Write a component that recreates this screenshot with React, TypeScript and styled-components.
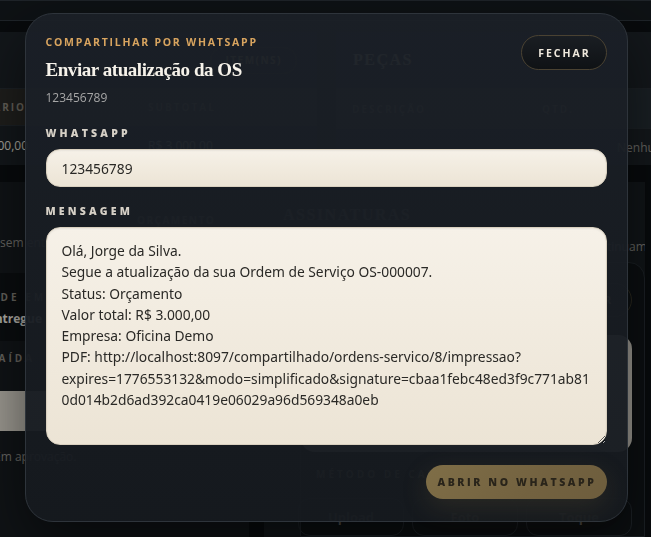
import React from "react";
import styled, { createGlobalStyle } from "styled-components";

const Global = createGlobalStyle`
  html, body { margin: 0; padding: 0; background: #0c0e11; }
  body { font-family: "Open Sans", "Noto Sans", sans-serif; overflow: hidden; }
  * { box-sizing: border-box; }
`;

/* ---------- background page ---------- */
const Page = styled.div`
  width: 651px;
  height: 537px;
  overflow: hidden;
  background: #0b0d10;
  display: flex;
  flex-direction: column;
  color: #d9d4cb;
`;
const TopBar = styled.div`
  height: 21px;
  flex: none;
  background: #13171b;
  border-top: 1px solid #2a3037;
  border-bottom: 1px solid #2a3037;
`;
const TopRow = styled.div`
  display: grid;
  grid-template-columns: 357px 1fr;
  column-gap: 19px;
  margin: 11px 0 0 -40px;
  height: 133px;
  flex: none;
`;
const BgCard = styled.div<{ $bg: string }>`
  background: ${(p) => p.$bg};
  display: flex;
  flex-direction: column;
  overflow: hidden;
`;
const CardHead = styled.div`
  height: 56px;
  display: flex;
  align-items: center;
  padding-left: 17px;
  justify-content: space-between;
`;
const CardTitle = styled.div<{ $dim?: boolean }>`
  font-family: "Liberation Serif", serif;
  font-weight: 700;
  font-size: 16px;
  letter-spacing: 1.5px;
  color: ${(p) => (p.$dim ? "#7a7467" : "#e9e3d8")};
`;
const Pill = styled.div`
  margin-left: auto;
  margin-right: 20px;
  height: 27px;
  padding: 0 14px;
  border-radius: 14px;
  border: 1px solid #3a3526;
  display: flex;
  align-items: center;
  font-size: 10px;
  font-weight: 700;
  letter-spacing: 1.5px;
  color: #d8c49a;
`;
const TRow = styled.div<{ $bg?: string; $h: number; $cols: string }>`
  height: ${(p) => p.$h}px;
  background: ${(p) => p.$bg || "transparent"};
  display: grid;
  grid-template-columns: ${(p) => p.$cols};
  align-items: center;
  border-top: 1px solid #262b31;
`;
const TH = styled.div<{ $align?: string; $pl?: number }>`
  font-size: 10px;
  font-weight: 700;
  letter-spacing: 2px;
  color: #8b8378;
  text-align: ${(p) => p.$align || "left"};
  padding-left: ${(p) => p.$pl || 0}px;
  white-space: nowrap;
`;
const TD = styled.div<{ $align?: string }>`
  font-size: 12px;
  color: #e6e1d8;
  text-align: ${(p) => p.$align || "left"};
  white-space: nowrap;
`;
const Muted = styled.div<{ $mt?: number; $ml?: number }>`
  margin-top: ${(p) => p.$mt || 0}px;
  margin-left: ${(p) => p.$ml || 0}px;
  font-size: 12px;
  color: #8d8a85;
  white-space: nowrap;
`;
const BottomRow = styled.div`
  display: grid;
  grid-template-columns: 249px 381px;
  column-gap: 15px;
  margin-top: 17px;
  flex: 1;
`;
const LeftStack = styled.div`
  background: #16191d;
  display: flex;
  flex-direction: column;
  padding-top: 26px;
  overflow: hidden;
`;
const Chip = styled.div`
  align-self: flex-start;
  margin-left: 131px;
  height: 24px;
  padding: 0 6px;
  font-size: 10px;
  font-weight: 700;
  letter-spacing: 1.5px;
  color: #7d7463;
  display: flex;
  align-items: center;
`;
const InfoBox = styled.div`
  margin: 22px 0 0 -40px;
  width: 180px;
  height: 68px;
  background: #0e1013;
  border-radius: 0 12px 12px 0;
  padding: 17px 0 0 0;
  display: flex;
  flex-direction: column;
  gap: 6px;
`;
const SmallLabel = styled.div<{ $ml?: number; $mt?: number }>`
  margin-left: ${(p) => p.$ml || 0}px;
  margin-top: ${(p) => p.$mt || 0}px;
  font-size: 10px;
  line-height: 14px;
  font-weight: 700;
  letter-spacing: 3px;
  color: #8a857d;
  white-space: nowrap;
`;
const BoldLine = styled.div`
  font-size: 12px;
  font-weight: 700;
  color: #f1ece3;
  white-space: nowrap;
`;
const BgInput = styled.div`
  margin: 26px 0 0 -20px;
  height: 40px;
  width: 200px;
  border-radius: 12px;
  background: #d8d2c7;
`;
const RightStack = styled.div`
  background: #171b1f;
  display: flex;
  flex-direction: column;
  padding: 24px 0 0 19px;
  overflow: hidden;
`;
const SubCard = styled.div`
  margin-top: 7px;
  margin-left: 17px;
  flex: 1;
  background: #101316;
  border: 1px solid #252a30;
  border-radius: 16px 16px 0 0;
  padding: 20px 12px 0 0;
  display: flex;
  flex-direction: column;
`;
const Ghost = styled.div`
  align-self: flex-end;
  height: 34px;
  padding: 0 18px;
  border-radius: 17px;
  border: 1px solid #3a3526;
  font-size: 10px;
  font-weight: 700;
  letter-spacing: 2px;
  color: #d9d2c4;
  display: flex;
  align-items: center;
`;
const Canvas = styled.div`
  margin-top: 18px;
  height: 117px;
  border-radius: 14px;
  background: #d9d3c8;
`;
const CaptureRow = styled.div`
  margin-top: 17px;
  display: grid;
  grid-template-columns: repeat(3, 1fr);
  gap: 8px;
  margin-left: -3px;
`;
const CaptureBtn = styled.div`
  height: 38px;
  border: 1px solid #262b31;
  border-radius: 12px;
  display: flex;
  justify-content: center;
  align-items: center;
  font-size: 13px;
  font-weight: 700;
  color: #6f6b65;
`;

/* ---------- modal ---------- */
const Overlay = styled.div`
  position: fixed;
  inset: 0;
  background: rgba(4, 6, 8, 0.28);
  display: flex;
  align-items: flex-start;
  justify-content: center;
  padding: 13px 0 0 1px;
`;
const Modal = styled.div`
  width: 603px;
  background: linear-gradient(180deg, rgba(27, 32, 39, 0.96) 0%, rgba(22, 26, 31, 0.96) 100%);
  border: 1px solid #2e343b;
  border-radius: 28px;
  padding: 20px 20px 22px 20px;
  box-shadow: 0 24px 60px rgba(0, 0, 0, 0.55);
  display: flex;
  flex-direction: column;
`;
const Header = styled.div`
  display: flex;
  justify-content: space-between;
  align-items: flex-start;
`;
const HeadText = styled.div`
  display: flex;
  flex-direction: column;
`;
const Eyebrow = styled.div`
  font-size: 10.5px;
  line-height: 16px;
  font-weight: 700;
  letter-spacing: 1.75px;
  color: #d8a45f;
`;
const Title = styled.h2`
  margin: 8px 0 0 0;
  font-family: "Liberation Serif", serif;
  font-weight: 700;
  font-size: 19px;
  line-height: 24px;
  letter-spacing: -0.45px;
  color: #f6f2ea;
`;
const Sub = styled.div`
  margin-top: 7px;
  font-size: 12px;
  line-height: 18px;
  color: #a7a7a7;
`;
const CloseBtn = styled.button`
  margin-top: 1px;
  height: 35px;
  width: 86px;
  border-radius: 18px;
  border: 1px solid #4a4232;
  background: linear-gradient(180deg, #1a1e23, #0f1215);
  color: #efe9dd;
  font-family: "Open Sans", sans-serif;
  font-size: 10.5px;
  font-weight: 700;
  letter-spacing: 2px;
  padding: 0 0 0 2px;
  cursor: pointer;
`;
const Field = styled.label<{ $mt: number }>`
  display: flex;
  flex-direction: column;
  gap: 9px;
  margin-top: ${(p) => p.$mt}px;
`;
const FieldLabel = styled.span`
  font-size: 10.5px;
  line-height: 14px;
  font-weight: 800;
  letter-spacing: 3.2px;
  color: #d6d0c6;
`;
const inputLook = `
  width: 100%;
  border: 1px solid #d9d0bf;
  border-radius: 14px;
  background: linear-gradient(180deg, #f6f1e8 0%, #ece4d5 100%);
  color: #2a2926;
  font-family: "Noto Sans", "Open Sans", sans-serif;
  font-size: 13.8px;
  outline: none;
  box-shadow: inset 0 1px 2px rgba(0,0,0,0.06);
`;
const Input = styled.input`
  ${inputLook}
  height: 38px;
  padding: 0 15px;
`;
const TextArea = styled.textarea`
  ${inputLook}
  height: 218px;
  padding: 12px 13px 12px 15px;
  line-height: 21.3px;
  resize: vertical;
  display: block;
`;
const Footer = styled.div`
  margin-top: 20px;
  display: flex;
  justify-content: flex-end;
`;
const PrimaryBtn = styled.button`
  height: 34px;
  width: 181px;
  border: none;
  border-radius: 17px;
  background: linear-gradient(135deg, #7f6e47 0%, #736240 60%, #6d5d3d 100%);
  box-shadow: 0 8px 26px rgba(120, 100, 60, 0.22);
  color: #29241a;
  font-family: "Open Sans", sans-serif;
  font-size: 10.5px;
  font-weight: 800;
  letter-spacing: 2.6px;
  padding: 0 0 0 2px;
  cursor: pointer;
`;

const message = `Olá, Jorge da Silva.
Segue a atualização da sua Ordem de Serviço OS-000007.
Status: Orçamento
Valor total: R$ 3.000,00
Empresa: Oficina Demo
PDF: http://localhost:8097/compartilhado/ordens-servico/8/impressao?expires=1776553132&modo=simplificado&signature=cbaa1febc48ed3f9c771ab810d014b2d6ad392ca0419e06029a96d569348a0eb`;

export default function App() {
  return (
    <>
      <Global />
      <Page>
        <TopBar />
        <TopRow>
          <BgCard $bg="#1a1e23">
            <CardHead>
              <span />
              <Pill>ITEM(NS)</Pill>
            </CardHead>
            <TRow $h={37} $bg="#2a2825" $cols="66px 122px 1fr">
              <TH $align="right">UNITÁRIO</TH>
              <span />
              <TH>SUBTOTAL</TH>
            </TRow>
            <TRow $h={40} $cols="68px 120px 1fr">
              <TD $align="right">R$ 3.000,00</TD>
              <span />
              <TD>R$ 3.000,00</TD>
            </TRow>
          </BgCard>
          <BgCard $bg="#1b1f24">
            <CardHead>
              <CardTitle>PEÇAS</CardTitle>
            </CardHead>
            <TRow $h={40} $bg="#232a30" $cols="206px 1fr">
              <TH $pl={16}>DESCRIÇÃO</TH>
              <TH>QTD.</TH>
            </TRow>
            <TRow $h={37} $cols="281px 1fr">
              <span />
              <Muted>Nenhuma peça adicionada</Muted>
            </TRow>
          </BgCard>
        </TopRow>
        <BottomRow>
          <LeftStack>
            <Chip>ORÇAMENTO</Chip>
            <Muted $mt={2}>sem entrada registrada</Muted>
            <InfoBox>
              <SmallLabel $ml={-4}>DATA DE EMISSÃO</SmallLabel>
              <BoldLine>Não entregue</BoldLine>
            </InfoBox>
            <SmallLabel $ml={-10} $mt={10}>SAÍDA</SmallLabel>
            <BgInput />
            <Muted $mt={17} $ml={-6}>Em aprovação.</Muted>
          </LeftStack>
          <RightStack>
            <CardTitle $dim>ASSINATURAS</CardTitle>
            <Muted $mt={14} $ml={220}>As assinaturas continuam intactas.</Muted>
            <SubCard>
              <Ghost>LIMPAR</Ghost>
              <Canvas />
              <SmallLabel $ml={15} $mt={15}>MÉTODO DE CAPTURA</SmallLabel>
              <CaptureRow>
                <CaptureBtn>Upload</CaptureBtn>
                <CaptureBtn>Foto</CaptureBtn>
                <CaptureBtn>Toque</CaptureBtn>
              </CaptureRow>
            </SubCard>
          </RightStack>
        </BottomRow>
      </Page>
      <Overlay>
        <Modal>
          <Header>
            <HeadText>
              <Eyebrow>COMPARTILHAR POR WHATSAPP</Eyebrow>
              <Title>Enviar atualização da OS</Title>
              <Sub>123456789</Sub>
            </HeadText>
            <CloseBtn>FECHAR</CloseBtn>
          </Header>
          <Field $mt={19}>
            <FieldLabel>WHATSAPP</FieldLabel>
            <Input defaultValue="123456789" />
          </Field>
          <Field $mt={17}>
            <FieldLabel>MENSAGEM</FieldLabel>
            <TextArea defaultValue={message} />
          </Field>
          <Footer>
            <PrimaryBtn>ABRIR NO WHATSAPP</PrimaryBtn>
          </Footer>
        </Modal>
      </Overlay>
    </>
  );
}
